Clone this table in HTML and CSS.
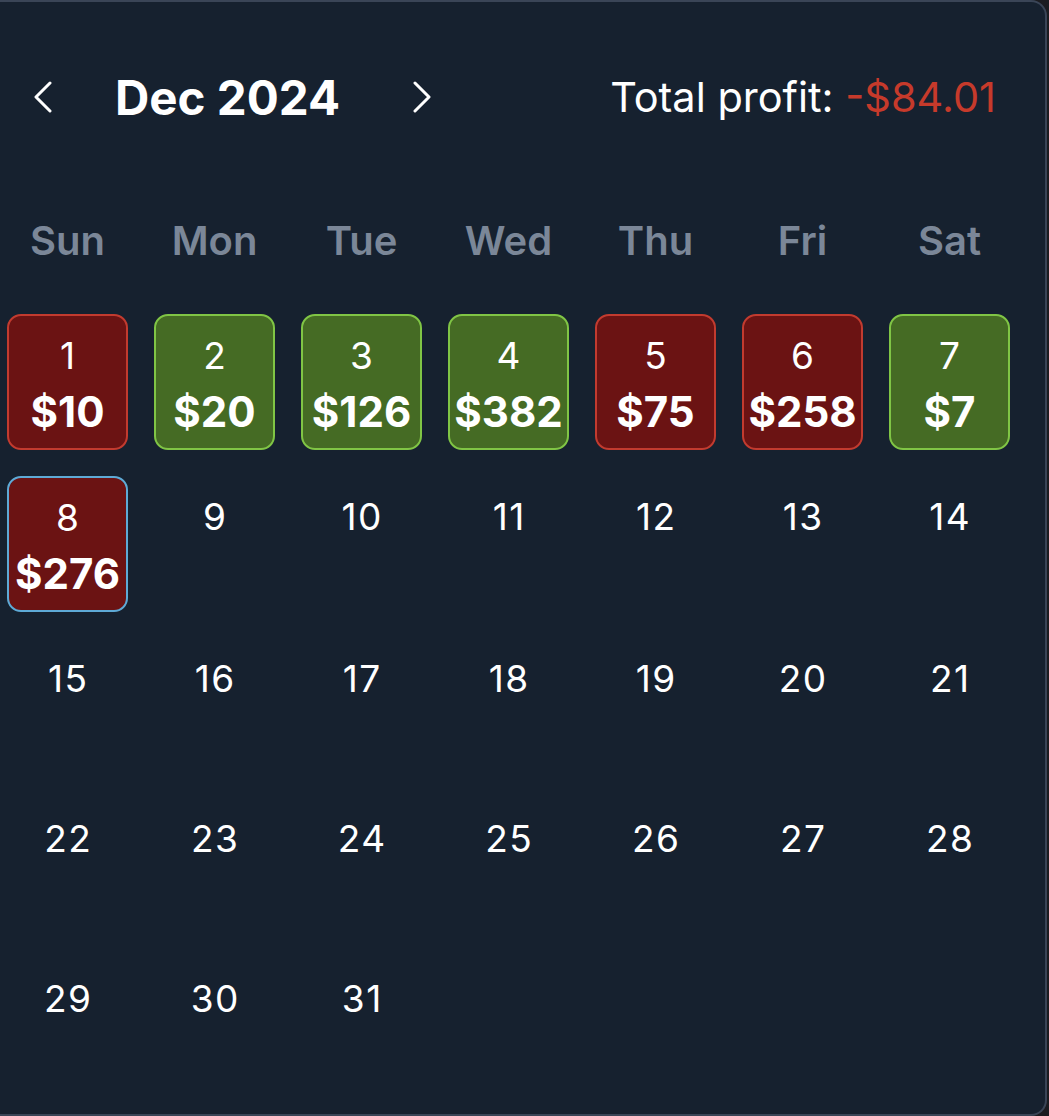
FILE: index.html
```html
<!DOCTYPE html>
<html lang="en">
<head>
<meta charset="utf-8">
<title>Calendar</title>
<link rel="stylesheet" href="styles.css">
</head>
<body>
<div class="panel">
  <div class="header">
    <button class="nav nav-prev" aria-label="Previous month">
      <svg width="20" height="32" viewBox="0 0 20 32"><polyline points="17,2 3,16 17,30" fill="none" stroke="#ffffff" stroke-width="3" stroke-linecap="round" stroke-linejoin="round"/></svg>
    </button>
    <div class="title">Dec 2024</div>
    <button class="nav nav-next" aria-label="Next month">
      <svg width="20" height="32" viewBox="0 0 20 32"><polyline points="3,2 17,16 3,30" fill="none" stroke="#ffffff" stroke-width="3" stroke-linecap="round" stroke-linejoin="round"/></svg>
    </button>
    <div class="total">Total profit: <span class="neg">-$84.01</span></div>
  </div>

  <div class="weekdays">
    <div>Sun</div><div>Mon</div><div>Tue</div><div>Wed</div><div>Thu</div><div>Fri</div><div>Sat</div>
  </div>

  <div class="days">
    <div class="day loss"><span class="num">1</span><span class="amt">$10</span></div>
    <div class="day gain"><span class="num">2</span><span class="amt">$20</span></div>
    <div class="day gain"><span class="num">3</span><span class="amt">$126</span></div>
    <div class="day gain"><span class="num">4</span><span class="amt">$382</span></div>
    <div class="day loss"><span class="num">5</span><span class="amt">$75</span></div>
    <div class="day loss"><span class="num">6</span><span class="amt">$258</span></div>
    <div class="day gain"><span class="num">7</span><span class="amt">$7</span></div>

    <div class="day loss today"><span class="num">8</span><span class="amt">$276</span></div>
    <div class="day"><span class="num">9</span><span class="amt"></span></div>
    <div class="day"><span class="num">10</span><span class="amt"></span></div>
    <div class="day"><span class="num">11</span><span class="amt"></span></div>
    <div class="day"><span class="num">12</span><span class="amt"></span></div>
    <div class="day"><span class="num">13</span><span class="amt"></span></div>
    <div class="day"><span class="num">14</span><span class="amt"></span></div>

    <div class="day"><span class="num">15</span><span class="amt"></span></div>
    <div class="day"><span class="num">16</span><span class="amt"></span></div>
    <div class="day"><span class="num">17</span><span class="amt"></span></div>
    <div class="day"><span class="num">18</span><span class="amt"></span></div>
    <div class="day"><span class="num">19</span><span class="amt"></span></div>
    <div class="day"><span class="num">20</span><span class="amt"></span></div>
    <div class="day"><span class="num">21</span><span class="amt"></span></div>

    <div class="day"><span class="num">22</span><span class="amt"></span></div>
    <div class="day"><span class="num">23</span><span class="amt"></span></div>
    <div class="day"><span class="num">24</span><span class="amt"></span></div>
    <div class="day"><span class="num">25</span><span class="amt"></span></div>
    <div class="day"><span class="num">26</span><span class="amt"></span></div>
    <div class="day"><span class="num">27</span><span class="amt"></span></div>
    <div class="day"><span class="num">28</span><span class="amt"></span></div>

    <div class="day"><span class="num">29</span><span class="amt"></span></div>
    <div class="day"><span class="num">30</span><span class="amt"></span></div>
    <div class="day"><span class="num">31</span><span class="amt"></span></div>
  </div>
</div>
</body>
</html>
```

FILE: styles.css
```css
html, body {
  margin: 0;
  padding: 0;
  background: #1b1c21;
}

body {
  font-family: Inter, "Noto Sans", "Liberation Sans", sans-serif;
  color: #ffffff;
}

.panel {
  box-sizing: border-box;
  width: 1047px;
  height: 1116px;
  background: #16212f;
  border: 2px solid #3a4557;
  border-left: 0;
  border-radius: 0 16px 16px 0;
  overflow: hidden;
}

.header {
  display: flex;
  align-items: center;
  height: 54px;
  margin-top: 68px;
  padding-left: 33px;
  padding-right: 49px;
}

.nav {
  display: flex;
  align-items: center;
  justify-content: center;
  padding: 0;
  margin: 0;
  border: 0;
  background: none;
  width: 20px;
  height: 32px;
}

.title {
  margin-left: 62px;
  width: 297px;
  font-size: 47.5px;
  font-weight: 700;
}

.total {
  margin-left: auto;
  font-size: 41.5px;
  font-weight: 400;
}

.neg {
  color: #c63a2b;
}

.weekdays {
  display: grid;
  grid-template-columns: repeat(7, 121px);
  column-gap: 26px;
  padding-left: 7px;
  margin-top: 93px;
  height: 48px;
  line-height: 48px;
  text-align: center;
  font-size: 40px;
  font-weight: 600;
  color: #7b8798;
}

.days {
  display: grid;
  grid-template-columns: repeat(7, 121px);
  column-gap: 26px;
  row-gap: 26px;
  padding-left: 7px;
  margin-top: 49px;
}

.day {
  display: flex;
  flex-direction: column;
  align-items: center;
  gap: 8px;
  padding: 17px 0 13px;
  border-radius: 14px;
  text-align: center;
}

.day .num {
  display: block;
  height: 48px;
  line-height: 48px;
  font-size: 37px;
  font-weight: 400;
  letter-spacing: 1.5px;
  padding-left: 1.5px;
}

.day .amt {
  display: block;
  height: 48px;
  line-height: 48px;
  font-size: 42px;
  font-weight: 700;
}

.day.loss,
.day.gain {
  padding: 16px 0 12px;
}

.day.loss {
  background: #6b1313;
  border: 2px solid #c23b2f;
}

.day.gain {
  background: #456b24;
  border: 2px solid #80c545;
}

.day.today {
  border-color: #5eaad6;
}
```
